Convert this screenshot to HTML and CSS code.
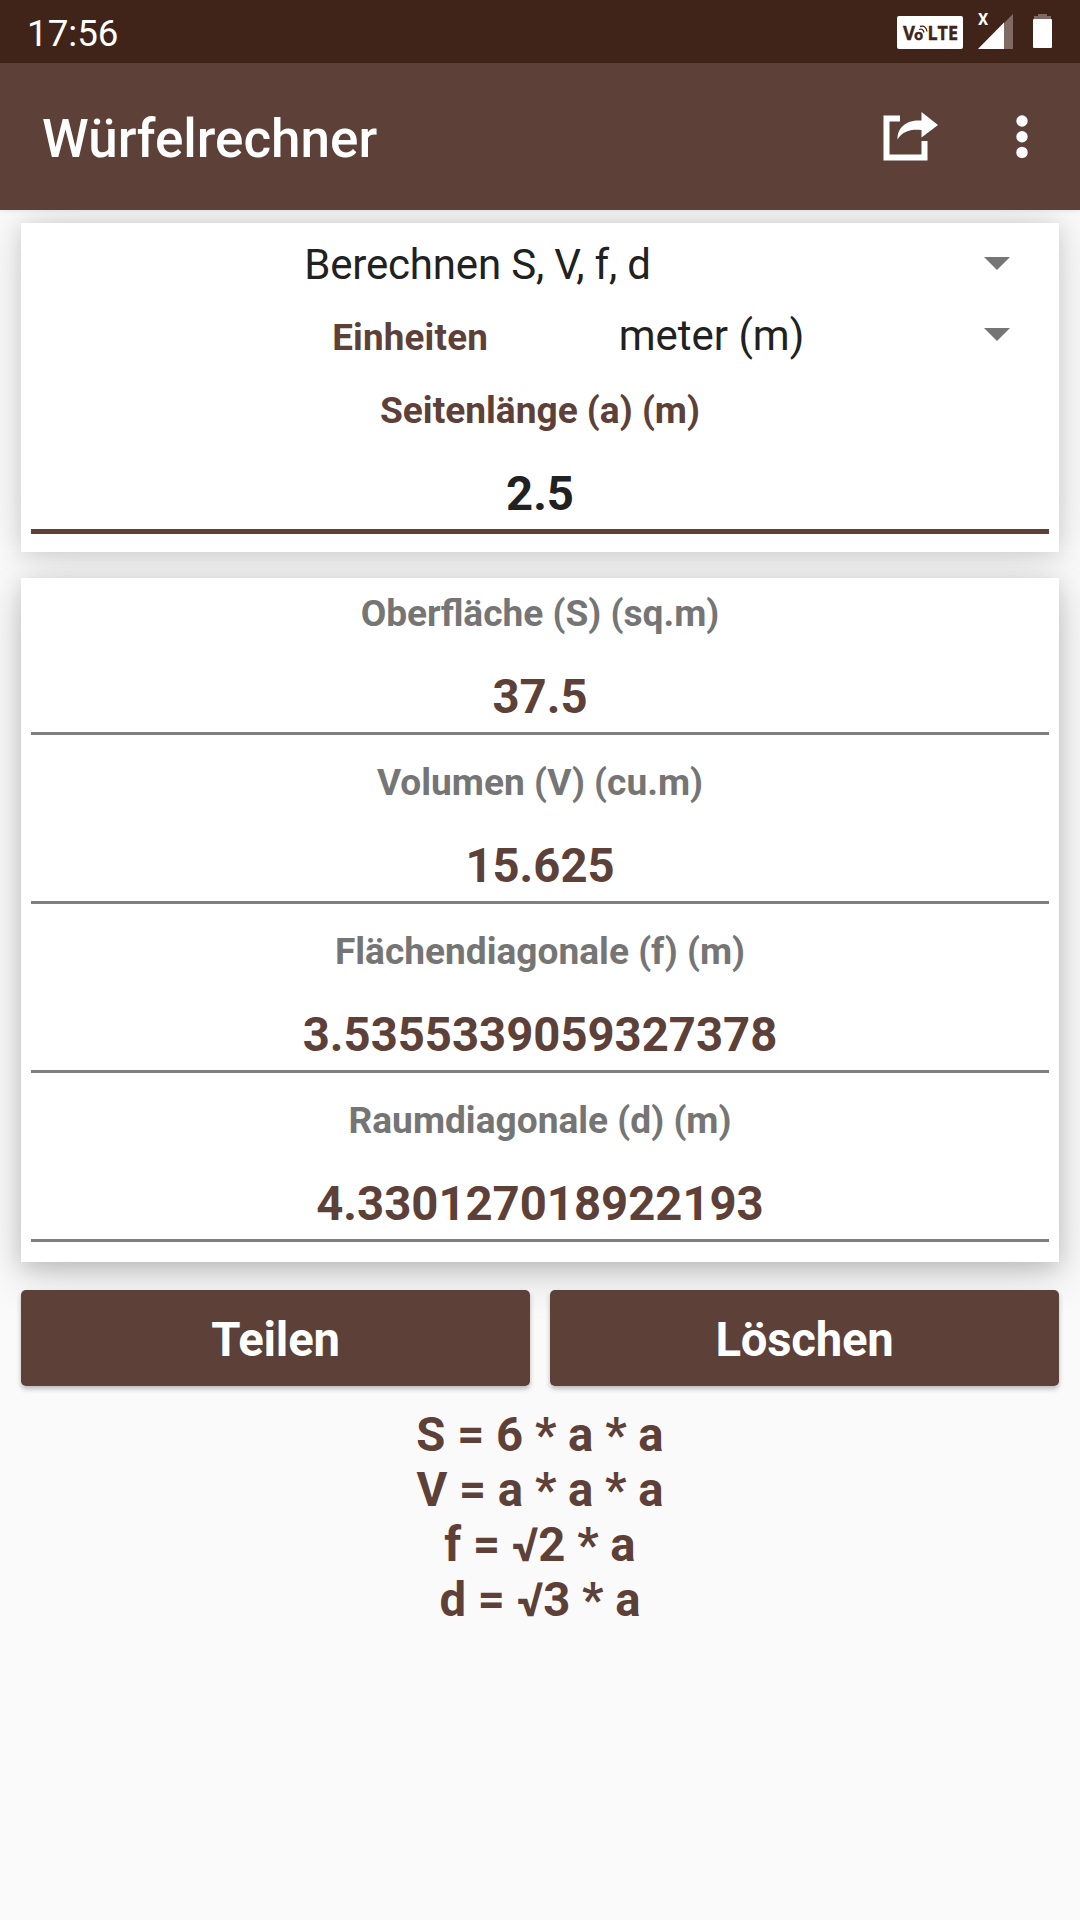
FILE: index.html
```
<!DOCTYPE html>
<html lang="de">
<head>
    <meta charset="UTF-8">
    <meta name="viewport" content="width=device-width, initial-scale=1.0">
    <title>Würfelrechner</title>
    <link rel="stylesheet" href="styles.css">
</head>
<body>
    <div class="status-bar">
        <span class="time">17:56</span>
        <svg class="status-icons" width="160" height="52" viewBox="896 0 160 52">
            <rect x="897" y="16" width="66" height="33" rx="2" fill="#fff"/>
            <g class="volte">
                <text x="903" y="40" textLength="12" lengthAdjust="spacingAndGlyphs" font-size="19">V</text>
                <text x="914" y="40" font-size="15">o</text>
                <text x="927.5" y="40" textLength="30.5" lengthAdjust="spacingAndGlyphs" font-size="19">LTE</text>
            </g>
            <path d="M919 29.500q4-1.500 5 3M920 26.500q6-1.500 7 5" fill="none" stroke="#40241a" stroke-width="1.300"/>
            <text class="no-data" x="978" y="25">X</text>
            <path d="M1013 14v35h-35z" fill="#806a64"/>
            <path d="M1004 22.500V49H978z" fill="#fff"/>
            <path d="M1038 14h9v2h4v3h-17v-3h4z" fill="#806a64"/>
            <rect x="1033" y="19" width="19" height="29" rx="1" fill="#fff"/>
        </svg>
    </div>

    <header class="app-bar">
        <h1>Würfelrechner</h1>
        <svg class="share" width="56" height="50" viewBox="0 0 56 50">
            <path d="M18 6.500H4.500V45.500H42.500V29" fill="none" stroke="#fff" stroke-width="6"/>
            <path d="M39.500 0L56 13 39.500 25.500V18C29 17 20.500 19 15.500 27.500C15 15 25 7.500 39.500 8.500z" fill="#fff"/>
        </svg>
        <svg class="more" width="12" height="44" viewBox="0 0 12 44">
            <circle cx="6" cy="6" r="5.700"/>
            <circle cx="6" cy="21.700" r="5.700"/>
            <circle cx="6" cy="37.400" r="5.700"/>
        </svg>
    </header>

    <main>
        <section class="card input-card">
            <div class="spinner">
                <span class="choice mode">Berechnen S, V, f, d</span>
                <span class="arrow"></span>
            </div>
            <div class="spinner">
                <span class="unit-label">Einheiten</span>
                <span class="choice">meter (m)</span>
                <span class="arrow"></span>
            </div>
            <div class="field side">
                <div class="label">Seitenlänge (a) (m)</div>
                <div class="value">2.5</div>
            </div>
        </section>

        <section class="card result-card">
            <div class="field">
                <div class="label">Oberfläche (S) (sq.m)</div>
                <div class="value">37.5</div>
            </div>
            <div class="field">
                <div class="label">Volumen (V) (cu.m)</div>
                <div class="value">15.625</div>
            </div>
            <div class="field">
                <div class="label">Flächendiagonale (f) (m)</div>
                <div class="value">3.5355339059327378</div>
            </div>
            <div class="field">
                <div class="label">Raumdiagonale (d) (m)</div>
                <div class="value">4.330127018922193</div>
            </div>
        </section>

        <div class="buttons">
            <button type="button">Teilen</button>
            <button type="button">Löschen</button>
        </div>

        <div class="formulas">
            <div>S = 6 * a * a</div>
            <div>V = a * a * a</div>
            <div>f = √2 * a</div>
            <div>d = √3 * a</div>
        </div>
    </main>
</body>
</html>
```
FILE: styles.css
```
* {
    box-sizing: border-box;
}
body {
    margin: 0;
    min-height: 1920px;
    background-color: #fafafa;
    font-family: Roboto, sans-serif;
    color: #5d4037;
}

/* Statusleiste */
.status-bar {
    display: flex;
    justify-content: space-between;
    height: 63px;
    padding: 0 24px 0 27px;
    background-color: #40241a;
    color: #fff;
}
.time {
    padding-top: 12px;
    font-size: 36.75px;
    line-height: 43px;
}
.volte {
    font-family: "Open Sans", sans-serif;
    font-weight: bold;
    fill: #40241a;
    stroke: #40241a;
    stroke-width: 0.4px;
}
.no-data {
    font-size: 16px;
    font-weight: bold;
    fill: #fff;
}

/* Titelleiste */
.app-bar {
    position: relative;
    z-index: 1;
    display: flex;
    align-items: center;
    height: 147px;
    padding: 0 52px 0 42px;
    background-color: #5d4037;
    color: #fff;
    box-shadow: 0 1px 4px rgba(0, 0, 0, 0.08);
}
.app-bar h1 {
    flex: 1;
    margin: 5px 0 0;
    font-size: 53px;
    font-weight: 500;
    line-height: 62px;
}
.share {
    margin-right: 78px;
}
.more {
    fill: #fff;
}

/* Karten */
main {
    position: relative;
    z-index: 0;
    padding: 13px 21px 0;
}
.card {
    position: relative;
    padding: 0 10px;
    background-color: #fff;
}
/* Schatten liegt unter beiden Karten */
.card::before {
    content: "";
    position: absolute;
    inset: 0;
    z-index: -1;
}
.input-card {
    padding-top: 6px;
    padding-bottom: 18px;
}
.input-card::before {
    box-shadow: 0 0 50px rgba(0, 0, 0, 0.11), 0 2px 20px rgba(0, 0, 0, 0.13);
}
.result-card {
    display: flex;
    flex-direction: column;
    gap: 26px;
    margin-top: 26px;
    padding-top: 14px;
    padding-bottom: 20px;
}
.result-card::before {
    box-shadow: 0 12px 44px rgba(0, 0, 0, 0.17), 0 6px 20px rgba(0, 0, 0, 0.14);
}

.spinner {
    display: flex;
    align-items: center;
    height: 71px;
    padding-right: 39px;
}
.choice {
    flex: 1;
    font-size: 42px;
    line-height: 50px;
    text-align: center;
    color: #212121;
}
.mode {
    letter-spacing: -0.18px;
}
.unit-label {
    width: 468px;
    padding: 4px 11px 0 0;
    font-size: 36.75px;
    font-weight: bold;
    letter-spacing: 0.2px;
    text-align: right;
}
.arrow {
    width: 26px;
    height: 13px;
    margin: 0 0 2px 60px;
    background-color: #757575;
    clip-path: polygon(0 0, 100% 0, 50% 100%);
}

.label {
    font-size: 37.1px;
    font-weight: bold;
    line-height: 43px;
    text-align: center;
    color: #757575;
}
.value {
    padding-top: 27px;
    border-bottom: 3px solid #7f7f7f;
    font-size: 47.25px;
    font-weight: bold;
    line-height: 70px;
    text-align: center;
}
.side {
    margin-top: 18px;
}
.side .label {
    color: #5d4037;
}
.side .value {
    border-bottom: 5px solid #5d4037;
    color: #212121;
}

.buttons {
    display: flex;
    gap: 20px;
    margin-top: 28px;
}
.buttons button {
    flex: 1;
    height: 96px;
    padding: 4px 0 0;
    border: none;
    border-radius: 5px;
    background-color: #5d4037;
    color: #fff;
    font-family: inherit;
    font-size: 47.25px;
    font-weight: bold;
    letter-spacing: -0.2px;
    box-shadow: 0 3px 5px rgba(0, 0, 0, 0.25);
}

.formulas {
    margin-top: 22px;
    font-size: 47.25px;
    font-weight: bold;
    line-height: 55px;
    text-align: center;
}
```
